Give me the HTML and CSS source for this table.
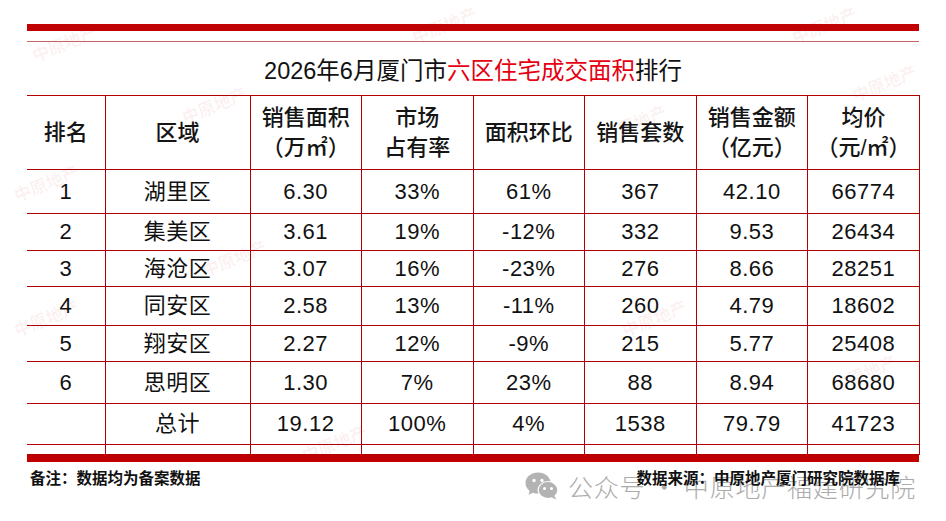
FILE: index.html
```html
<!DOCTYPE html>
<html lang="zh">
<head>
<meta charset="utf-8">
<title>2026年6月厦门市六区住宅成交面积排行</title>
<link rel="stylesheet" href="styles.css">
</head>
<body>
<div class="page">
  <div class="bar"></div>
  <div class="rule"></div>
  <div class="title">2026年6月厦门市<span class="red">六区住宅成交面积</span>排行</div>
  <table class="grid">
    <colgroup>
      <col class="c-rank"><col class="c-area"><col class="c-n"><col class="c-n2"><col class="c-n"><col class="c-n2"><col class="c-n"><col class="c-n2">
    </colgroup>
    <thead>
      <tr class="h-head">
        <th class="first">排名</th>
        <th>区域</th>
        <th>销售面积<br>（万㎡）</th>
        <th>市场<br>占有率</th>
        <th>面积环比</th>
        <th>销售套数</th>
        <th>销售金额<br>（亿元）</th>
        <th>均价<br>（元/㎡）</th>
      </tr>
    </thead>
    <tbody>
      <tr class="h44"><td class="first">1</td><td>湖里区</td><td>6.30</td><td>33%</td><td>61%</td><td>367</td><td>42.10</td><td>66774</td></tr>
      <tr class="h37"><td class="first">2</td><td>集美区</td><td>3.61</td><td>19%</td><td>-12%</td><td>332</td><td>9.53</td><td>26434</td></tr>
      <tr class="h36"><td class="first">3</td><td>海沧区</td><td>3.07</td><td>16%</td><td>-23%</td><td>276</td><td>8.66</td><td>28251</td></tr>
      <tr class="h39"><td class="first">4</td><td>同安区</td><td>2.58</td><td>13%</td><td>-11%</td><td>260</td><td>4.79</td><td>18602</td></tr>
      <tr class="h36"><td class="first">5</td><td>翔安区</td><td>2.27</td><td>12%</td><td>-9%</td><td>215</td><td>5.77</td><td>25408</td></tr>
      <tr class="h42"><td class="first">6</td><td>思明区</td><td>1.30</td><td>7%</td><td>23%</td><td>88</td><td>8.94</td><td>68680</td></tr>
      <tr class="h41"><td class="first"></td><td>总计</td><td>19.12</td><td>100%</td><td>4%</td><td>1538</td><td>79.79</td><td>41723</td></tr>
      <tr class="h10"><td class="first"></td><td></td><td></td><td></td><td></td><td></td><td></td><td></td></tr>
    </tbody>
  </table>
  <div class="bar"></div>
  <div class="footer">
    <span class="note">备注：数据均为备案数据</span>
    <span class="note">数据来源：中原地产厦门研究院数据库</span>
  </div>
</div>

<div class="marks" aria-hidden="true">
  <span class="mk m1">中原地产</span>
  <span class="mk m2">中原地产</span>
  <span class="mk m3">中原地产</span>
  <span class="mk m4">中原地产</span>
  <span class="mk m5">中原地产</span>
  <span class="mk m6">中原地产</span>
  <span class="mk m7">中原地产</span>
  <span class="mk m8">中原地产</span>
  <span class="mk m9">中原地产</span>
  <span class="mk m10">中原地产</span>
  <span class="mk m11">中原地产</span>
  <span class="mk m12">中原地产</span>
</div>

<div class="wechat">
  <svg class="wx-icon" viewBox="0 0 34 28" width="34" height="28">
    <ellipse cx="13" cy="11" rx="12.5" ry="10.5" fill="#b3b3b3"/>
    <path d="M5 18 L3.5 23 L9 20 Z" fill="#b3b3b3"/>
    <circle cx="9" cy="8.5" r="1.7" fill="#fff"/>
    <circle cx="17" cy="8.5" r="1.7" fill="#fff"/>
    <ellipse cx="23" cy="18" rx="10.5" ry="9" fill="#fff"/>
    <ellipse cx="23" cy="18" rx="9.3" ry="7.9" fill="#b3b3b3"/>
    <path d="M29 23.5 L31.5 27.5 L26 25.3 Z" fill="#b3b3b3"/>
    <circle cx="19.5" cy="16.5" r="1.5" fill="#fff"/>
    <circle cx="26.5" cy="16.5" r="1.5" fill="#fff"/>
  </svg>
  <span class="wx-text">公众号 · 中原地产福建研究院</span>
</div>
</body>
</html>
```

FILE: styles.css
```css
html, body {
  margin: 0;
  padding: 0;
  background: #ffffff;
}

body {
  width: 946px;
  height: 521px;
  overflow: hidden;
  position: relative;
  font-family: "Liberation Sans", "Noto Sans CJK SC", sans-serif;
  color: #111111;
}

.page {
  padding: 24px 27px 0 27px;
  position: relative;
  z-index: 1;
}

.bar {
  height: 7px;
  background: #c00000;
}

.rule {
  margin-top: 10px;
  height: 1px;
  background: #c86464;
}

.title {
  height: 53px;
  display: flex;
  align-items: center;
  justify-content: center;
  font-size: 23.5px;
  color: #111111;
}

.title .red {
  color: #e60012;
}

.grid {
  width: 893px;
  border-collapse: collapse;
  table-layout: fixed;
  font-size: 22px;
}

.c-rank { width: 78px; }
.c-area { width: 145px; }
.c-n { width: 111px; }
.c-n2 { width: 112px; }

.grid th,
.grid td {
  border: 1px solid #b00000;
  padding: 0;
  text-align: center;
  vertical-align: middle;
  color: #111111;
}

.grid .first {
  border-left: none;
}

.grid th {
  font-weight: 500;
  font-size: 22px;
  line-height: 30px;
  color: #151515;
}

.grid td {
  font-size: 22px;
  line-height: 26px;
  letter-spacing: 0.5px;
}

.h-head { height: 74px; }
.h44 { height: 44px; }
.h37 { height: 37px; }
.h36 { height: 36px; }
.h39 { height: 39px; }
.h42 { height: 42px; }
.h41 { height: 41px; }
.h10 { height: 10px; }
.h10 td { line-height: 0; font-size: 0; }

.footer {
  height: 30px;
  display: flex;
  align-items: center;
  justify-content: space-between;
  padding: 0 19px 0 3px;
}

.note {
  font-family: "Noto Sans CJK SC", sans-serif;
  font-weight: 700;
  font-size: 15.5px;
  color: #111111;
}

/* faint brand watermarks */
.marks {
  position: absolute;
  inset: 0;
  pointer-events: none;
  z-index: 0;
}

.mk {
  position: absolute;
  font-family: "Noto Sans CJK SC", sans-serif;
  font-weight: 700;
  font-size: 17px;
  color: rgba(215, 40, 40, 0.07);
  transform: rotate(-22deg);
  white-space: nowrap;
}

.m1 { left: 30px; top: 30px; }
.m2 { left: 180px; top: 92px; }
.m3 { left: 410px; top: 12px; }
.m4 { left: 790px; top: 12px; }
.m5 { left: 850px; top: 70px; }
.m6 { left: 600px; top: 110px; }
.m7 { left: 12px; top: 170px; }
.m8 { left: 200px; top: 245px; }
.m9 { left: 12px; top: 305px; }
.m10 { left: 620px; top: 305px; }
.m11 { left: 300px; top: 430px; }
.m12 { left: 830px; top: 360px; }

.wechat {
  position: absolute;
  left: 525px;
  top: 468px;
  display: flex;
  align-items: center;
  gap: 9px;
  z-index: 0;
  pointer-events: none;
}

.wx-icon {
  display: block;
}

.wx-text {
  font-family: "Noto Sans CJK SC", sans-serif;
  font-weight: 300;
  font-size: 25px;
  color: #ababab;
  letter-spacing: 0.8px;
  white-space: nowrap;
}
```
